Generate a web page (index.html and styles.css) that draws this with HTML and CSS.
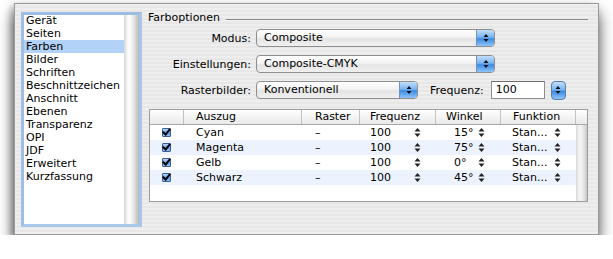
FILE: index.html
```html
<!DOCTYPE html>
<html lang="de">

<head>
    <meta charset="UTF-8">
    <title>Drucken - Farben</title>
    <link rel="stylesheet" href="styles.css">
</head>

<body>
    <div class="window">
        <div class="liste">
            <ul>
                <li>Gerät</li>
                <li>Seiten</li>
                <li class="aktiv">Farben</li>
                <li>Bilder</li>
                <li>Schriften</li>
                <li>Beschnittzeichen</li>
                <li>Anschnitt</li>
                <li>Ebenen</li>
                <li>Transparenz</li>
                <li>OPI</li>
                <li>JDF</li>
                <li>Erweitert</li>
                <li>Kurzfassung</li>
            </ul>
            <div class="scroll"></div>
        </div>

        <div class="panel">
            <div class="gruppe">
                <span>Farboptionen</span>
                <div class="linie"></div>
            </div>

            <div class="zeile">
                <label>Modus:</label>
                <div class="popup breit">
                    <span>Composite</span>
                    <i class="kappe"><svg width="10" height="12" viewBox="0 0 10 12"><path d="M5 2 L7.5 5 L2.5 5 Z M5 10 L7.5 7 L2.5 7 Z" fill="#111"/></svg></i>
                </div>
            </div>

            <div class="zeile">
                <label>Einstellungen:</label>
                <div class="popup breit">
                    <span>Composite-CMYK</span>
                    <i class="kappe"><svg width="10" height="12" viewBox="0 0 10 12"><path d="M5 2 L7.5 5 L2.5 5 Z M5 10 L7.5 7 L2.5 7 Z" fill="#111"/></svg></i>
                </div>
            </div>

            <div class="zeile">
                <label>Rasterbilder:</label>
                <div class="popup schmal">
                    <span>Konventionell</span>
                    <i class="kappe"><svg width="10" height="12" viewBox="0 0 10 12"><path d="M5 2 L7.5 5 L2.5 5 Z M5 10 L7.5 7 L2.5 7 Z" fill="#111"/></svg></i>
                </div>
                <span class="freq-label">Frequenz:</span>
                <div class="eingabe">100</div>
                <i class="stepper"><svg width="10" height="12" viewBox="0 0 10 12"><path d="M5 2 L7.5 5 L2.5 5 Z M5 10 L7.5 7 L2.5 7 Z" fill="#111"/></svg></i>
            </div>

            <div class="tabelle">
                <div class="tab-haupt">
                    <div class="reihe kopf">
                        <div></div>
                        <div>Auszug</div>
                        <div>Raster</div>
                        <div>Frequenz</div>
                        <div>Winkel</div>
                        <div>Funktion</div>
                    </div>
                    <div class="reihe">
                        <div class="zelle-check"><span class="check"></span></div>
                        <div>Cyan</div>
                        <div>–</div>
                        <div class="wert"><span>100</span><svg class="pf" width="7" height="9" viewBox="0 0 7 9"><path d="M3.5 0 L6.5 3.5 L0.5 3.5 Z M3.5 9 L6.5 5.5 L0.5 5.5 Z" fill="#222"/></svg></div>
                        <div class="wert winkel"><span>15°</span><svg class="pf" width="7" height="9" viewBox="0 0 7 9"><path d="M3.5 0 L6.5 3.5 L0.5 3.5 Z M3.5 9 L6.5 5.5 L0.5 5.5 Z" fill="#222"/></svg></div>
                        <div class="wert funktion"><span>Stan...</span><svg class="pf" width="7" height="9" viewBox="0 0 7 9"><path d="M3.5 0 L6.5 3.5 L0.5 3.5 Z M3.5 9 L6.5 5.5 L0.5 5.5 Z" fill="#222"/></svg></div>
                    </div>
                    <div class="reihe">
                        <div class="zelle-check"><span class="check"></span></div>
                        <div>Magenta</div>
                        <div>–</div>
                        <div class="wert"><span>100</span><svg class="pf" width="7" height="9" viewBox="0 0 7 9"><path d="M3.5 0 L6.5 3.5 L0.5 3.5 Z M3.5 9 L6.5 5.5 L0.5 5.5 Z" fill="#222"/></svg></div>
                        <div class="wert winkel"><span>75°</span><svg class="pf" width="7" height="9" viewBox="0 0 7 9"><path d="M3.5 0 L6.5 3.5 L0.5 3.5 Z M3.5 9 L6.5 5.5 L0.5 5.5 Z" fill="#222"/></svg></div>
                        <div class="wert funktion"><span>Stan...</span><svg class="pf" width="7" height="9" viewBox="0 0 7 9"><path d="M3.5 0 L6.5 3.5 L0.5 3.5 Z M3.5 9 L6.5 5.5 L0.5 5.5 Z" fill="#222"/></svg></div>
                    </div>
                    <div class="reihe">
                        <div class="zelle-check"><span class="check"></span></div>
                        <div>Gelb</div>
                        <div>–</div>
                        <div class="wert"><span>100</span><svg class="pf" width="7" height="9" viewBox="0 0 7 9"><path d="M3.5 0 L6.5 3.5 L0.5 3.5 Z M3.5 9 L6.5 5.5 L0.5 5.5 Z" fill="#222"/></svg></div>
                        <div class="wert winkel"><span>0°</span><svg class="pf" width="7" height="9" viewBox="0 0 7 9"><path d="M3.5 0 L6.5 3.5 L0.5 3.5 Z M3.5 9 L6.5 5.5 L0.5 5.5 Z" fill="#222"/></svg></div>
                        <div class="wert funktion"><span>Stan...</span><svg class="pf" width="7" height="9" viewBox="0 0 7 9"><path d="M3.5 0 L6.5 3.5 L0.5 3.5 Z M3.5 9 L6.5 5.5 L0.5 5.5 Z" fill="#222"/></svg></div>
                    </div>
                    <div class="reihe">
                        <div class="zelle-check"><span class="check"></span></div>
                        <div>Schwarz</div>
                        <div>–</div>
                        <div class="wert"><span>100</span><svg class="pf" width="7" height="9" viewBox="0 0 7 9"><path d="M3.5 0 L6.5 3.5 L0.5 3.5 Z M3.5 9 L6.5 5.5 L0.5 5.5 Z" fill="#222"/></svg></div>
                        <div class="wert winkel"><span>45°</span><svg class="pf" width="7" height="9" viewBox="0 0 7 9"><path d="M3.5 0 L6.5 3.5 L0.5 3.5 Z M3.5 9 L6.5 5.5 L0.5 5.5 Z" fill="#222"/></svg></div>
                        <div class="wert funktion"><span>Stan...</span><svg class="pf" width="7" height="9" viewBox="0 0 7 9"><path d="M3.5 0 L6.5 3.5 L0.5 3.5 Z M3.5 9 L6.5 5.5 L0.5 5.5 Z" fill="#222"/></svg></div>
                    </div>
                </div>
                <div class="tab-scroll">
                    <div class="ecke"></div>
                    <div class="spur"></div>
                </div>
            </div>
        </div>
    </div>
</body>

</html>
```

FILE: styles.css
```css
body {
    margin: 0;
    padding: 0;
    background-color: white;
    font-family: "DejaVu Sans", "Liberation Sans", sans-serif;
    font-size: 11px;
    color: #000;
}

.window {
    display: flex;
    margin: 3px 0 0 14px;
    width: 585px;
    height: 232px;
    box-sizing: border-box;
    padding: 8px 10px 7px 6px;
    border: 1px solid #9a9a9a;
    background: repeating-linear-gradient(#eeeeee 0 2px, #e7e7e7 2px 4px);
    box-shadow: 0 10px 14px rgba(0, 0, 0, 0.68), -3px 3px 7px rgba(0, 0, 0, 0.25);
}

/* Liste links */
.liste {
    display: flex;
    width: 123px;
    height: 215px;
    box-sizing: border-box;
    border: 3px solid #a3c2e5;
    border-color: #9dbde3 #a8c6e8 #a8c6e8 #9dbde3;
    background-color: white;
}

.liste ul {
    flex: 1;
    list-style: none;
    margin: -1px 0 0 0;
    padding: 0;
}

.liste li {
    height: 13px;
    line-height: 14px;
    padding-left: 2px;
    white-space: nowrap;
}

.liste li.aktiv {
    background-color: #b3d2f8;
}

.scroll {
    width: 15px;
    background: linear-gradient(to right, #d4d4d4, #f4f4f4 20%, #ffffff 35%, #e6e6e6 65%, #c4c4c4 90%, #b5b5b5);
}

/* Rechte Seite */
.panel {
    flex: 1;
    margin-left: 6px;
    margin-top: -1px;
    display: flex;
    flex-direction: column;
}

.gruppe {
    display: flex;
    align-items: center;
    height: 13px;
}

.linie {
    flex: 1;
    height: 1px;
    margin: 3px 0 0 6px;
    background-color: #8c8c8c;
}

.zeile {
    display: flex;
    align-items: center;
    height: 18px;
    margin-top: 8px;
}

.gruppe + .zeile {
    margin-top: 5px;
}

.zeile label {
    width: 103px;
    margin-right: 5px;
    text-align: right;
}

.popup {
    display: flex;
    height: 18px;
    box-sizing: border-box;
    border: 1px solid #8e8e8e;
    border-radius: 4px;
    background: linear-gradient(#ffffff, #f3f3f3 45%, #e4e4e4 55%, #f0f0f0);
    overflow: hidden;
}

.popup span {
    flex: 1;
    padding-left: 7px;
    line-height: 16px;
}

.popup.breit {
    width: 239px;
}

.popup.schmal {
    width: 162px;
}

.kappe,
.stepper {
    display: flex;
    align-items: center;
    justify-content: center;
    width: 17px;
    background: linear-gradient(#c3defa, #79b3f1 45%, #3e8be3 55%, #8ec4fa);
    border-left: 1px solid #6f93bd;
}

.stepper {
    width: 15px;
    height: 19px;
    margin-left: 6px;
    border: 1px solid #5b7ea8;
    border-radius: 4px;
    box-sizing: border-box;
}

.freq-label {
    margin-left: 12px;
}

.eingabe {
    width: 54px;
    height: 18px;
    box-sizing: border-box;
    margin-left: 7px;
    padding-left: 4px;
    line-height: 16px;
    border: 1px solid #8e8e8e;
    border-top-color: #6e6e6e;
    background-color: white;
}

/* Tabelle */
.tabelle {
    display: flex;
    margin: 10px 0 0 1px;
    height: 91px;
    border: 1px solid #9c9c9c;
    background-color: white;
}

.tab-haupt {
    flex: 1;
}

.reihe {
    display: grid;
    grid-template-columns: 34px 118px 58px 76px 65px 75px;
    height: 15px;
    line-height: 15px;
}

.reihe:nth-child(odd) {
    background-color: #edf3fe;
}

.reihe > div {
    padding-left: 12px;
    white-space: nowrap;
}

.reihe > div:nth-child(3) {
    padding-left: 13px;
}

.reihe > div:nth-child(4) {
    padding-left: 10px;
}

.reihe.kopf {
    background: linear-gradient(#ffffff, #f4f4f4 50%, #e9e9e9);
    border-bottom: 1px solid #a9a9a9;
    height: 14px;
    line-height: 14px;
}

.kopf > div {
    border-right: 1px solid #c2c2c2;
}

.kopf > div:nth-child(5) {
    padding-left: 10px;
}

.zelle-check {
    display: flex;
    align-items: center;
}

.check {
    width: 9px;
    height: 9px;
    box-sizing: border-box;
    border: 1px solid #3d5f8f;
    border-radius: 1px;
    background: linear-gradient(#b3d5f8, #5f9de6 60%, #8dc0f5);
    position: relative;
}

.check::after {
    content: "";
    position: absolute;
    left: 1px;
    top: -2px;
    width: 3px;
    height: 6px;
    border: solid #000;
    border-width: 0 2px 2px 0;
    transform: rotate(40deg);
}

.wert {
    display: flex;
    align-items: center;
}

.wert span {
    width: 44px;
}

.winkel {
    padding-left: 18px !important;
}

.winkel span {
    width: 24px;
}

.funktion {
    padding-left: 11px !important;
}

.funktion span {
    width: 42px;
}

.pf {
    display: block;
}

.tab-scroll {
    width: 11px;
    display: flex;
    flex-direction: column;
}

.ecke {
    height: 14px;
    border-bottom: 1px solid #a9a9a9;
    background: linear-gradient(#ffffff, #f4f4f4 50%, #e9e9e9);
}

.spur {
    flex: 1;
    background: linear-gradient(to right, #d8d8d8, #f6f6f6 30%, #ececec 60%, #c8c8c8);
}
```
